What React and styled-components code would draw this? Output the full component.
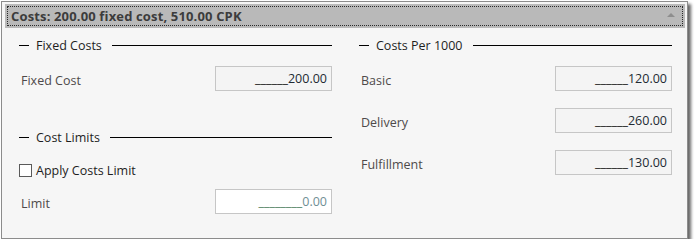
import React from "react";
import styled, { createGlobalStyle } from "styled-components";

const GlobalStyle = createGlobalStyle`
  html, body {
    margin: 0;
    padding: 0;
    background: #ffffff;
  }
  body {
    font-family: "Open Sans", "Noto Sans", sans-serif;
  }
`;

const Panel = styled.div`
  box-sizing: border-box;
  margin: 1px 0 0 1px;
  width: 687px;
  height: 238px;
  border: 1px solid #8c8c8c;
  background: #f6f6f6;
  box-shadow: 3px 3px 3px rgba(0, 0, 0, 0.6);
  padding: 2px 2px 0 3px;
`;

const Header = styled.div`
  height: 24px;
  background: #b9b9b9;
  padding: 2px;
  box-sizing: border-box;
`;

const HeaderInner = styled.div`
  height: 100%;
  border: 1px dotted #2a2a2a;
  box-sizing: border-box;
  display: flex;
  align-items: center;
  padding: 0 7px 0 3px;
`;

const HeaderTitle = styled.span`
  flex: 1;
  font-size: 13px;
  font-weight: 700;
  letter-spacing: 0.15px;
  color: #3c3c3c;
`;

const CollapseArrow = styled.span`
  width: 0;
  height: 0;
  border-left: 4px solid transparent;
  border-right: 4px solid transparent;
  border-bottom: 4px solid #8e8e8e;
  margin-top: -2px;
`;

const Body = styled.div`
  display: grid;
  grid-template-columns: 313px 313px;
  column-gap: 27px;
  padding: 8px 0 0 14px;
`;

const Column = styled.div`
  display: flex;
  flex-direction: column;
`;

const GroupTitle = styled.div`
  display: flex;
  align-items: center;
  height: 18px;
  margin-top: ${(p) => p.$top || 0}px;
  font-size: 12.5px;
  color: #1e1e1e;

  &::before {
    content: "";
    width: 10px;
    height: 1px;
    background: #000;
    margin-right: 7px;
  }
  &::after {
    content: "";
    flex: 1;
    height: 1px;
    background: #000;
    margin-left: 10px;
  }
`;

const FieldRow = styled.div`
  display: flex;
  align-items: center;
  justify-content: space-between;
  margin-top: ${(p) => p.$top || 0}px;
`;

const Label = styled.span`
  font-size: 12.5px;
  color: #4e4a4a;
  padding: 3px 0 0 2px;
`;

const Box = styled.div`
  box-sizing: border-box;
  width: 117px;
  height: 25px;
  border: 1px solid #c6c6c6;
  background: ${(p) => (p.$editable ? "#ffffff" : "#f4f4f4")};
  display: flex;
  align-items: center;
  justify-content: flex-end;
  padding-right: 4px;
  font-size: 12.5px;
  color: ${(p) => (p.$editable ? "#6f8f94" : "#222a33")};
`;

const Mask = styled.span`
  color: ${(p) => (p.$editable ? "#4f7f5f" : "#111")};
`;

const CheckRow = styled.label`
  display: flex;
  align-items: center;
  height: 18px;
  margin-top: ${(p) => p.$top || 0}px;
  font-size: 12.5px;
  color: #1e1e1e;
`;

const CheckBox = styled.span`
  box-sizing: border-box;
  width: 13px;
  height: 13px;
  border: 1px solid #5a5a5a;
  background: #fff;
  margin-right: 4px;
`;

function Field({ label, value, mask = "______", editable, top }) {
  return (
    <FieldRow $top={top}>
      <Label>{label}</Label>
      <Box $editable={editable}>
        <Mask $editable={editable}>{mask}</Mask>
        {value}
      </Box>
    </FieldRow>
  );
}

export default function App() {
  return (
    <>
      <GlobalStyle />
      <Panel>
        <Header>
          <HeaderInner>
            <HeaderTitle>Costs: 200.00 fixed cost, 510.00 CPK</HeaderTitle>
            <CollapseArrow />
          </HeaderInner>
        </Header>
        <Body>
          <Column>
            <GroupTitle>Fixed Costs</GroupTitle>
            <Field label="Fixed Cost" value="200.00" top={12} />
            <GroupTitle $top={37}>Cost Limits</GroupTitle>
            <CheckRow $top={15}>
              <CheckBox />
              Apply Costs Limit
            </CheckRow>
            <Field label="Limit" value="0.00" mask="________" editable top={10} />
          </Column>
          <Column>
            <GroupTitle>Costs Per 1000</GroupTitle>
            <Field label="Basic" value="120.00" top={12} />
            <Field label="Delivery" value="260.00" top={17} />
            <Field label="Fulfillment" value="130.00" top={17} />
          </Column>
        </Body>
      </Panel>
    </>
  );
}
